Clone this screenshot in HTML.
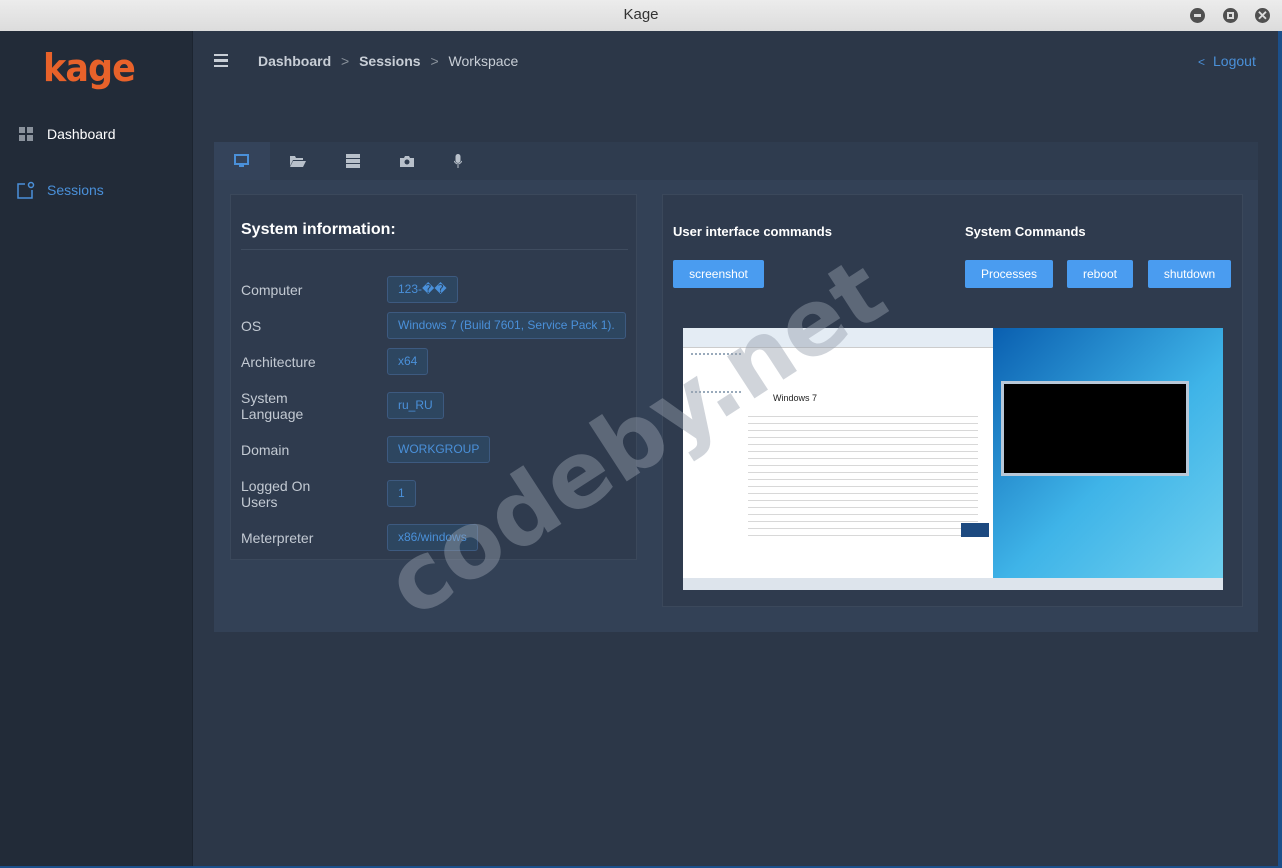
<!DOCTYPE html><html><head><meta charset="utf-8"><style>
*{box-sizing:border-box;margin:0;padding:0}
body{width:1282px;height:868px;overflow:hidden;font-family:"Liberation Sans",sans-serif;background:#2c3748;position:relative}
.tb{position:absolute;left:0;top:0;width:1282px;height:31px;background:linear-gradient(#ececec,#dcdcdc);text-align:center;font-size:15px;line-height:30px;color:#333}
.wb{position:absolute;top:8px;width:15px;height:15px;border-radius:50%;background:#505050}
.sb{position:absolute;left:0;top:31px;width:193px;height:837px;background:#222b38;border-right:1px solid #1c2430}
.card{position:absolute;left:214px;top:142px;width:1044px;height:490px;background:#334156}
.tabs{position:absolute;left:0;top:0;width:1044px;height:38px;background:#2f3c4f}
.box{position:absolute;background:#2f3b4e;border:1px solid #3b485b}
.lbl{position:absolute;left:10px;color:#c3cad3;font-size:14px;line-height:16px}
.val{position:absolute;left:156px;border:1px solid #3d5a80;background:#2d4660;color:#4a90d9;font-size:12px;height:27px;line-height:25px;padding:0 10px;border-radius:3px}
.btn{position:absolute;top:65px;height:28px;background:#4a9cf0;color:#fff;font-size:12px;line-height:28px;text-align:center;border-radius:2px}
h3{position:absolute;color:#fff;font-size:13px;font-weight:bold}
</style></head><body>
<div class="tb">Kage</div>
<div class="wb" style="left:1190px"><div style="position:absolute;left:4px;top:6px;width:7px;height:3px;background:#ddd"></div></div>
<div class="wb" style="left:1223px"><div style="position:absolute;left:4px;top:4px;width:7px;height:7px;border:2px solid #ddd"></div></div>
<div class="wb" style="left:1255px;color:#ddd;font-size:13px;line-height:15px;text-align:center;font-weight:bold">✕</div>
<div class="sb">
<div style="position:absolute;left:43px;top:14px;font-size:38px;font-weight:bold;color:#e8622a;letter-spacing:-1px;font-family:'DejaVu Sans',sans-serif;line-height:46px;transform:scaleX(0.92);transform-origin:left">kage</div>
<svg style="position:absolute;left:19px;top:96px" width="14" height="14"><rect width="6" height="6" fill="#8a929c"/><rect x="8" width="6" height="6" fill="#8a929c"/><rect y="8" width="6" height="6" fill="#8a929c"/><rect x="8" y="8" width="6" height="6" fill="#8a929c"/></svg>
<div style="position:absolute;left:47px;top:95px;color:#fff;font-size:14px">Dashboard</div>
<svg style="position:absolute;left:17px;top:150px" width="18" height="18" fill="none" stroke="#4a90d9" stroke-width="1.5"><path d="M8 3H1v14h14V9"/><circle cx="14" cy="4" r="2.5"/></svg>
<div style="position:absolute;left:47px;top:151px;color:#4a90d9;font-size:14px">Sessions</div>
</div>
<div style="position:absolute;left:214px;top:54px;width:14px;height:13px;border-top:2.5px solid #c8ced6;border-bottom:2.5px solid #c8ced6"><div style="margin-top:3px;height:2.5px;background:#c8ced6"></div></div>
<div style="position:absolute;left:258px;top:53px;font-size:14px;color:#c8ced6"><b>Dashboard</b> <span style="color:#8a929c;margin:0 6px">&gt;</span> <b>Sessions</b> <span style="color:#8a929c;margin:0 6px">&gt;</span> Workspace</div>
<div style="position:absolute;left:1198px;top:53px;font-size:14px;color:#4a90d9"><span style="font-size:12px;margin-right:8px">&lt;</span>Logout</div>
<div class="card">
<div class="tabs"><div style="position:absolute;left:0;top:0;width:56px;height:38px;background:#34435a"></div>
<svg style="position:absolute;left:20px;top:12px" width="15" height="14"><rect x="1" y="1" width="13" height="9" fill="none" stroke="#4a90d9" stroke-width="2"/><rect x="5" y="11" width="5" height="2" fill="#4a90d9"/></svg>
<svg style="position:absolute;left:76px;top:13px" width="16" height="12"><path d="M0 1h5l1 2h7v2H3L0 11z M3 6h13l-3 6H0z" fill="#b8c0ca"/></svg>
<svg style="position:absolute;left:132px;top:12px" width="14" height="14" fill="#b8c0ca"><rect y="0" width="14" height="4"/><rect y="5" width="14" height="4"/><rect y="10" width="14" height="4"/></svg>
<svg style="position:absolute;left:186px;top:13px" width="14" height="12"><path d="M0 3h4l1-2h4l1 2h4v9H0z" fill="#b8c0ca"/><circle cx="7" cy="7" r="2.5" fill="#2f3c4f"/></svg>
<svg style="position:absolute;left:240px;top:12px" width="8" height="15"><rect x="1.5" width="5" height="9" rx="2.5" fill="#b8c0ca"/><path d="M0 7q4 6 8 0M4 11v3" stroke="#b8c0ca" fill="none"/></svg>
</div>
<div class="box" style="left:16px;top:52px;width:407px;height:366px">
<div style="position:absolute;left:10px;top:26px;font-size:16px;font-weight:bold;color:#fff">System information:</div>
<div style="position:absolute;left:10px;right:8px;top:54px;border-top:1px solid #3f4c5f"></div>
<div class="lbl" style="top:87px">Computer</div><div class="val" style="top:81px">123-��</div>
<div class="lbl" style="top:123px">OS</div><div class="val" style="top:117px">Windows 7 (Build 7601, Service Pack 1).</div>
<div class="lbl" style="top:159px">Architecture</div><div class="val" style="top:153px">x64</div>
<div class="lbl" style="top:195px">System<br>Language</div><div class="val" style="top:197px">ru_RU</div>
<div class="lbl" style="top:247px">Domain</div><div class="val" style="top:241px">WORKGROUP</div>
<div class="lbl" style="top:283px">Logged On<br>Users</div><div class="val" style="top:285px">1</div>
<div class="lbl" style="top:335px">Meterpreter</div><div class="val" style="top:329px">x86/windows</div>
</div>
<div class="box" style="left:448px;top:52px;width:581px;height:413px">
<h3 style="left:10px;top:29px">User interface commands</h3>
<h3 style="left:302px;top:29px">System Commands</h3>
<div class="btn" style="left:10px;width:91px">screenshot</div>
<div class="btn" style="left:302px;width:88px">Processes</div>
<div class="btn" style="left:404px;width:66px">reboot</div>
<div class="btn" style="left:485px;width:83px">shutdown</div>
<div style="position:absolute;left:20px;top:133px;width:540px;height:262px;background:#fff;overflow:hidden">
<div style="position:absolute;left:0;top:0;width:310px;height:20px;background:#e4ecf4;border-bottom:1px solid #ccc"></div>
<div style="position:absolute;left:8px;top:25px;width:50px;height:40px;border-top:2px dotted #9ab;border-bottom:2px dotted #9ab"></div>
<div style="position:absolute;left:65px;top:82px;width:230px;height:130px;background:repeating-linear-gradient(#fff 0 6px,#d8d8d8 6px 7px)"></div>
<div style="position:absolute;left:90px;top:65px;font-size:9px;color:#222">Windows 7</div>
<div style="position:absolute;left:278px;top:195px;width:28px;height:14px;background:#1d4a80"></div>
<div style="position:absolute;left:310px;top:0;width:230px;height:250px;background:linear-gradient(135deg,#0a5fb0,#3fb4e8 55%,#6fd0ef)"></div>
<div style="position:absolute;left:318px;top:53px;width:188px;height:95px;background:#000;border:3px solid #b8c8d8"></div>
<div style="position:absolute;left:0;top:250px;width:540px;height:12px;background:#dde4ec"></div>
</div>
</div>
</div>
<div style="position:absolute;left:372px;top:555px;font-size:92px;font-weight:bold;color:rgba(150,160,172,.45);transform:rotate(-33deg);transform-origin:left top;white-space:nowrap;font-family:'DejaVu Sans',sans-serif;line-height:92px">codeby.net</div>
<div style="position:absolute;left:1278px;top:31px;width:4px;height:837px;background:#1b4f8a"></div>
<div style="position:absolute;left:0;top:866px;width:1282px;height:2px;background:#1b4f8a"></div>
</body></html>
